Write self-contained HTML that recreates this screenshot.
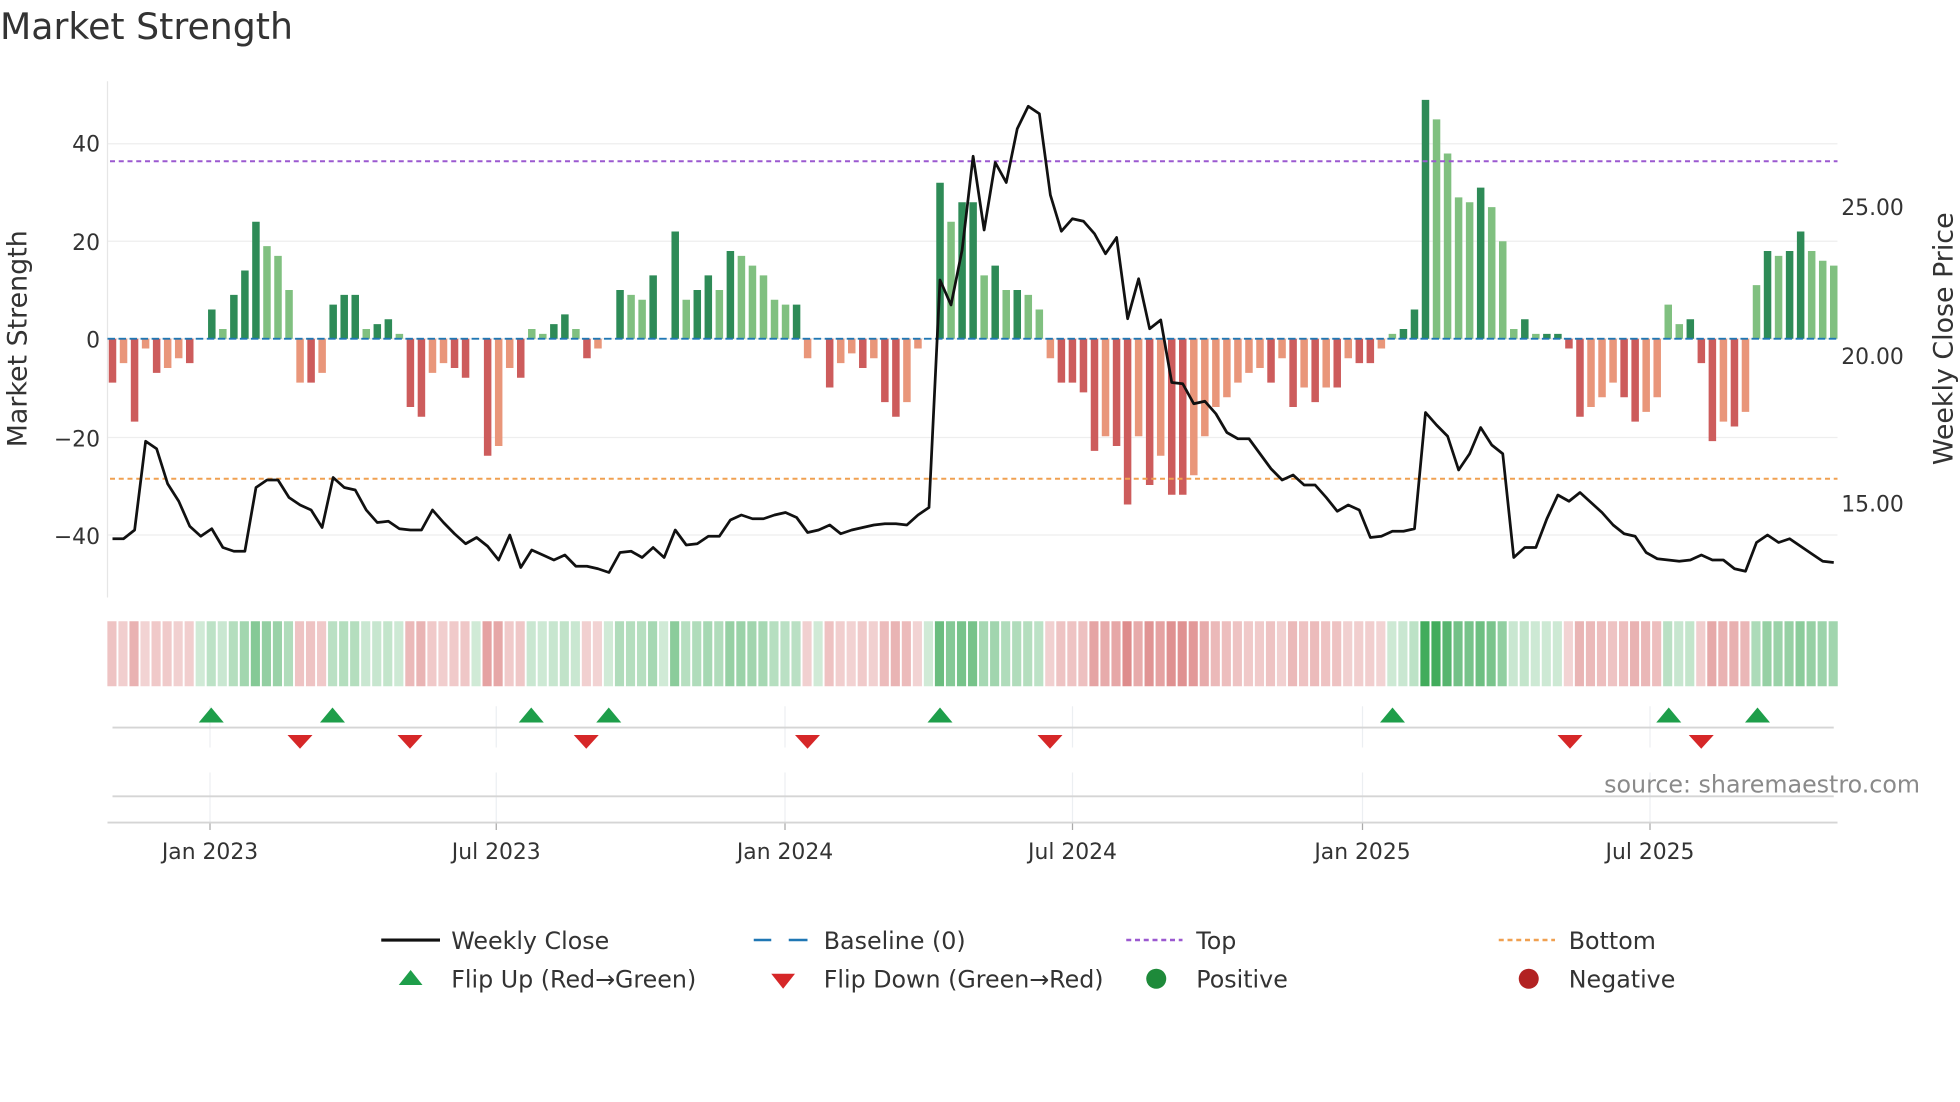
<!DOCTYPE html>
<html><head><meta charset="utf-8"><style>
html,body{margin:0;padding:0;background:#fff;width:1960px;height:1102px;overflow:hidden}
svg text{font-family:"DejaVu Sans","Liberation Sans",sans-serif;fill:#333}
</style></head><body>
<svg id="s" width="1960" height="1102" viewBox="0 0 1568 881.6" xmlns="http://www.w3.org/2000/svg">
<rect width="1568" height="882" fill="#fff"/>
<text x="0" y="31" font-size="29" fill="#333">Market Strength</text>
<g id="grid"></g>
<g id="bars"></g>
<g id="strip"></g>
<g id="price"></g>
<g font-size="17.5">
<text x="80" y="121" text-anchor="end">40</text>
<text x="80" y="200" text-anchor="end">20</text>
<text x="80" y="278" text-anchor="end">0</text>
<text x="80" y="357" text-anchor="end">−20</text>
<text x="80" y="435" text-anchor="end">−40</text>
<text x="1473" y="172">25.00</text>
<text x="1473" y="291">20.00</text>
<text x="1473" y="409">15.00</text>
<text x="168" y="687" text-anchor="middle">Jan 2023</text>
<text x="397" y="687" text-anchor="middle">Jul 2023</text>
<text x="628" y="687" text-anchor="middle">Jan 2024</text>
<text x="858" y="687" text-anchor="middle">Jul 2024</text>
<text x="1090" y="687" text-anchor="middle">Jan 2025</text>
<text x="1320" y="687" text-anchor="middle">Jul 2025</text>
</g>
<text transform="translate(21,271) rotate(-90)" font-size="21.5" text-anchor="middle">Market Strength</text>
<text transform="translate(1562,271) rotate(-90)" font-size="21.5" text-anchor="middle">Weekly Close Price</text>
<text x="1536" y="634" font-size="19" text-anchor="end" style="fill:#8a8a8a">source: sharemaestro.com</text>
<g font-size="19">
<line x1="305" y1="752" x2="352" y2="752" stroke="#111" stroke-width="2.5"/>
<text x="361" y="759">Weekly Close</text>
<line x1="603" y1="752" x2="617" y2="752" stroke="#1f77b4" stroke-width="2"/>
<line x1="631" y1="752" x2="646" y2="752" stroke="#1f77b4" stroke-width="2"/>
<text x="659" y="759">Baseline (0)</text>
<line x1="901" y1="752" x2="946" y2="752" stroke="#9b59d0" stroke-width="2" stroke-dasharray="4,3"/>
<text x="957" y="759">Top</text>
<line x1="1199" y1="752" x2="1244" y2="752" stroke="#f0a050" stroke-width="2" stroke-dasharray="4,3"/>
<text x="1255" y="759">Bottom</text>
<polygon points="319,788 338,788 328.5,776" fill="#1e9e4a"/>
<text x="361" y="790">Flip Up (Red→Green)</text>
<polygon points="617,779 636,779 626.5,791" fill="#d62728"/>
<text x="659" y="790">Flip Down (Green→Red)</text>
<circle cx="925" cy="783" r="8" fill="#1e8a3a"/>
<text x="957" y="790">Positive</text>
<circle cx="1223" cy="783" r="8" fill="#b22222"/>
<text x="1255" y="790">Negative</text>
</g>
</svg>
<script>
var NS="http://www.w3.org/2000/svg";
function el(p,t,a){var e=document.createElementNS(NS,t);for(var k in a)e.setAttribute(k,a[k]);document.getElementById(p).appendChild(e);return e;}
var V=[-9,-5,-17,-2,-7,-6,-4,-5,0,6,2,9,14,24,19,17,10,-9,-9,-7,7,9,9,2,3,4,1,-14,-16,-7,-5,-6,-8,0,-24,-22,-6,-8,2,1,3,5,2,-4,-2,0,10,9,8,13,0,22,8,10,13,10,18,17,15,13,8,7,7,-4,0,-10,-5,-3,-6,-4,-13,-16,-13,-2,0,32,24,28,28,13,15,10,10,9,6,-4,-9,-9,-11,-23,-20,-22,-34,-20,-30,-24,-32,-32,-28,-20,-14,-12,-9,-7,-6,-9,-4,-14,-10,-13,-10,-10,-4,-5,-5,-2,1,2,6,49,45,38,29,28,31,27,20,2,4,1,1,1,-2,-16,-14,-12,-9,-12,-17,-15,-12,7,3,4,-5,-21,-17,-18,-15,11,18,17,18,22,18,16,15];
var n=V.length,x0=90,x1=1467,dx=(x1-x0)/(n-1);
[115,193,271,350,428].forEach(function(y){el("grid","line",{x1:86,x2:1470,y1:y,y2:y,stroke:"#eeeeee","stroke-width":1});});
[168,397,628,858,1090,1320].forEach(function(x){el("grid","line",{x1:x,x2:x,y1:565,y2:598,stroke:"#eceff2"});el("grid","line",{x1:x,x2:x,y1:618,y2:658,stroke:"#eceff2"});el("grid","line",{x1:x,x2:x,y1:658,y2:664,stroke:"#aaa"});});
el("grid","line",{x1:86,x2:86,y1:65,y2:478,stroke:"#e6e6e6"});
el("grid","line",{x1:90,x2:1467,y1:582,y2:582,stroke:"#d5d5d5","stroke-width":1.5});
el("grid","line",{x1:90,x2:1467,y1:637,y2:637,stroke:"#d5d5d5","stroke-width":1.5});
el("grid","line",{x1:86,x2:1470,y1:658,y2:658,stroke:"#d5d5d5","stroke-width":1.5});
for(var i=0;i<n;i++){var v=V[i],x=x0+i*dx,prev=i?V[i-1]:0;var dark=Math.abs(v)>=Math.abs(prev);
 var c=v>=0?(dark?"#2e8b57":"#80c080"):(dark?"#cd5c5c":"#e9967a");
 var h=Math.abs(v)*3.9,y=v>=0?271-h:271;
 if(v!=0)el("bars","rect",{x:x-3,y:y,width:6,height:h,fill:c});
 var sc=v>=0?"rgba(40,160,70,"+(0.22+Math.min(v,45)/45*0.78*0.85).toFixed(2)+")":"rgba(205,80,80,"+(0.22+Math.min(-v,35)/35*0.45).toFixed(2)+")";
 el("strip","rect",{x:x-4.1,y:497,width:7.3,height:52,fill:sc});
}
for(var i=0;i<n;i++){el("bars","line",{x1:x0+i*dx-4,x2:x0+i*dx+4,y1:271,y2:271,stroke:"#1f77b4","stroke-width":1.5,"stroke-dasharray":"6,3"});}
el("bars","line",{x1:88,x2:1470,y1:129,y2:129,stroke:"#9b59d0","stroke-width":1.6,"stroke-dasharray":"4,3"});
el("bars","line",{x1:88,x2:1470,y1:383,y2:383,stroke:"#f0a050","stroke-width":1.6,"stroke-dasharray":"4,3"});
var P=[431,431,424,353,359,387,401,421,429,423,438,441,441,390,384,384,398,404,408,422,382,390,392,408,418,417,423,424,424,408,418,427,435,430,437,448,428,454,440,444,448,444,453,453,455,458,442,441,446,438,446,424,436,435,429,429,416,412,415,415,412,410,414,426,424,420,427,424,422,420,419,419,420,412,406,224,244,200,125,184,130,146,103,85,91,156,185,175,177,187,203,190,255,223,263,256,306,307,323,321,331,346,351,351,363,375,384,380,388,388,398,409,404,408,430,429,425,425,423,330,340,349,376,363,342,356,363,446,438,438,415,396,401,394,402,410,420,427,429,442,447,448,449,448,444,448,448,455,457,434,428,434,431,437,443,449,450];
var d="";var m=P.length,pdx=(x1-x0)/(m-1);
for(var i=0;i<m;i++)d+=(i?"L":"M")+(x0+i*pdx).toFixed(1)+","+P[i]+" ";
el("price","path",{d:d,fill:"none",stroke:"#111","stroke-width":2.2,"stroke-linejoin":"round"});
[169,266,425,487,752,1114,1335,1406].forEach(function(x){el("price","polygon",{points:(x-10)+",578 "+(x+10)+",578 "+x+",566",fill:"#1e9e4a"});});
[240,328,469,646,840,1256,1361].forEach(function(x){el("price","polygon",{points:(x-10)+",588 "+(x+10)+",588 "+x+",599",fill:"#d62728"});});
</script>
</body></html>
